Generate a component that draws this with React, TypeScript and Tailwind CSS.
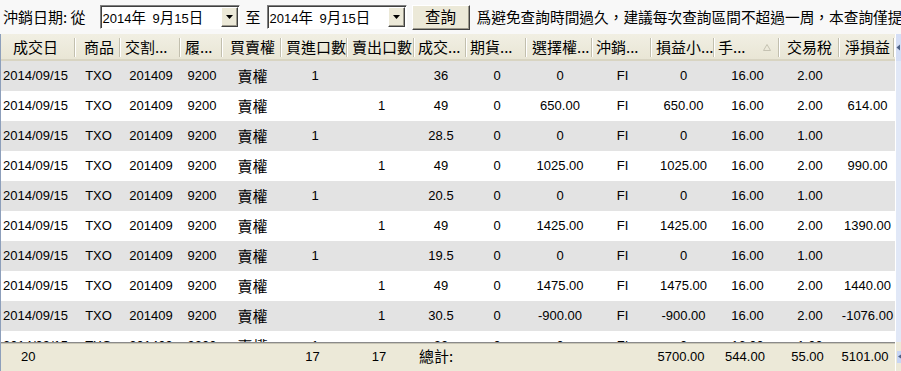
import React from "react";

const cjk = "font-['Noto_Sans_CJK_TC','Noto_Sans_CJK_SC',sans-serif]";
const num = "font-['Liberation_Sans',Arial,'Noto_Sans_CJK_TC',sans-serif]";

interface Col {
  w: string;
  label: string;
  hp: string;
  cell: string;
  sort?: boolean;
}

const cols: Col[] = [
  { w: "w-[76px]", label: "成交日", hp: "pl-[13px]", cell: "justify-start pl-[3px]" },
  { w: "w-[45px]", label: "商品", hp: "pl-[8px]", cell: "justify-center" },
  { w: "w-[60px]", label: "交割...", hp: "pl-[4px]", cell: "justify-center" },
  { w: "w-[42px]", label: "履...", hp: "pl-[4px]", cell: "justify-center" },
  { w: "w-[59px]", label: "買賣權", hp: "pl-[7px]", cell: "justify-center" },
  { w: "w-[66px]", label: "買進口數", hp: "pl-[4px]", cell: "justify-center" },
  { w: "w-[67px]", label: "賣出口數", hp: "pl-[4px]", cell: "justify-center" },
  { w: "w-[52px]", label: "成交...", hp: "pl-[3px]", cell: "justify-center" },
  { w: "w-[60px]", label: "期貨...", hp: "pl-[3px]", cell: "justify-center" },
  { w: "w-[66px]", label: "選擇權...", hp: "pl-[5px]", cell: "justify-center" },
  { w: "w-[59px]", label: "沖銷...", hp: "pl-[3px]", cell: "justify-center" },
  { w: "w-[63px]", label: "損益小...", hp: "pl-[4px]", cell: "justify-center" },
  { w: "w-[65px]", label: "手...", hp: "pl-[3px]", cell: "justify-center", sort: true },
  { w: "w-[60px]", label: "交易稅", hp: "pl-[7px]", cell: "justify-center" },
  { w: "w-[55px]", label: "淨損益", hp: "pl-[5px]", cell: "justify-center" },
];

const base = ["2014/09/15", "TXO", "201409", "9200", "賣權"];

const rows: string[][] = [
  [...base, "1", "", "36", "0", "0", "FI", "0", "16.00", "2.00", ""],
  [...base, "", "1", "49", "0", "650.00", "FI", "650.00", "16.00", "2.00", "614.00"],
  [...base, "1", "", "28.5", "0", "0", "FI", "0", "16.00", "1.00", ""],
  [...base, "", "1", "49", "0", "1025.00", "FI", "1025.00", "16.00", "2.00", "990.00"],
  [...base, "1", "", "20.5", "0", "0", "FI", "0", "16.00", "1.00", ""],
  [...base, "", "1", "49", "0", "1425.00", "FI", "1425.00", "16.00", "2.00", "1390.00"],
  [...base, "1", "", "19.5", "0", "0", "FI", "0", "16.00", "1.00", ""],
  [...base, "", "1", "49", "0", "1475.00", "FI", "1475.00", "16.00", "2.00", "1440.00"],
  [...base, "", "1", "30.5", "0", "-900.00", "FI", "-900.00", "16.00", "2.00", "-1076.00"],
  [...base, "1", "", "20", "0", "0", "FI", "0", "16.00", "1.00", ""],
];

const footer = ["20", "", "", "", "", "17", "17", "總計:", "", "", "", "5700.00", "544.00", "55.00", "5101.00"];

function DateBox() {
  return (
    <div className="flex h-[24px] w-[140px] items-center border border-t-[#808080] border-l-[#808080] border-b-white border-r-white bg-white shadow-[inset_1px_1px_0_#404040]">
      <span className={`flex-1 pl-[2px] pt-[1px] text-[14.5px] whitespace-pre text-black ${cjk}`}>
        <span className={`${num} text-[13px]`}>2014</span>年  <span className={`${num} text-[13px]`}>9</span>月
        <span className={`${num} text-[13px]`}>15</span>日
      </span>
      <div className="mr-[1px] flex h-[20px] w-[17px] items-center justify-center border border-t-white border-l-white border-b-[#404040] border-r-[#404040] bg-[#ece9d8] shadow-[inset_-1px_-1px_0_#9d9a8c]">
        <svg width="7" height="4" viewBox="0 0 7 4">
          <path d="M0 0h7L3.5 4z" fill="#000" />
        </svg>
      </div>
    </div>
  );
}

export default function App() {
  return (
    <div className={`flex h-[371px] w-[901px] flex-col overflow-hidden bg-[#f8f8f8] text-black ${cjk}`}>
      <div className="flex h-[34px] shrink-0 items-center whitespace-nowrap">
        <span className="ml-[3px] text-[15px]">沖銷日期: 從</span>
        <div className="ml-[14px]">
          <DateBox />
        </div>
        <span className="ml-[6px] text-[15px]">至</span>
        <div className="ml-[6px]">
          <DateBox />
        </div>
        <button className="ml-[5px] h-[25px] w-[58px] shrink-0 border border-t-white border-l-white border-b-[#404040] border-r-[#404040] bg-[#ece9d8] text-[15.5px] leading-none shadow-[inset_-1px_-1px_0_#9d9a8c]">
          查詢
        </button>
        <span className="ml-[7px] text-[14.7px]">
          爲避免查詢時間過久，建議每次查詢區間不超過一周，本查詢僅提供一個月內之資料
        </span>
      </div>

      <div className="flex min-h-0 flex-1">
        <div className="flex w-[895px] flex-col border-l border-[#8d9fbb]">
          <div className="flex h-[27px] shrink-0 bg-gradient-to-b from-[#f1efe3] to-[#e8e5d4] shadow-[inset_0_-2px_0_#d8d4c2]">
            {cols.map((c, i) => (
              <div key={i} className={`${c.w} flex shrink-0 items-center ${i === 0 ? "-ml-px" : ""}`}>
                <span className={`flex flex-1 items-center overflow-hidden whitespace-nowrap text-[15px] ${c.hp}`}>
                  {c.label}
                  {c.sort && (
                    <svg className="ml-auto mr-[7px]" width="8" height="7" viewBox="0 0 8 7">
                      <path d="M4 0.5L7.5 6.5H0.5z" fill="none" stroke="#c5c2b2" strokeWidth="1" />
                    </svg>
                  )}
                </span>
                <span className="h-[19px] w-[2px] shrink-0 border-l border-[#c2bfae] bg-white" />
              </div>
            ))}
          </div>

          <div className="min-h-0 flex-1 overflow-hidden">
            {rows.map((r, ri) => (
              <div key={ri} className={`flex h-[30px] ${ri % 2 === 0 ? "bg-[#e3e3e3]" : "bg-white"}`}>
                {cols.map((c, ci) => (
                  <div
                    key={ci}
                    className={`${c.w} flex shrink-0 items-center overflow-hidden whitespace-nowrap ${c.cell} ${ci === 0 ? "-ml-px" : ""} ${
                      ci === 4 ? `${cjk} text-[15px]` : `${num} text-[13px]`
                    }`}
                  >
                    {r[ci]}
                  </div>
                ))}
              </div>
            ))}
          </div>

          <div className={`flex h-[29px] shrink-0 items-center bg-[#ece9d8] shadow-[inset_0_1px_0_#8a8a8a,inset_0_2px_0_#c8c5b5] ${num} text-[13px]`}>
            {cols.map((c, ci) => (
              <div
                key={ci}
                className={`${c.w} flex shrink-0 items-center whitespace-nowrap ${ci === 0 ? "-ml-px justify-start pl-[21px]" : ci === 7 ? `justify-start pl-[4px] ${cjk} text-[15px]` : "justify-center pr-[5px]"}`}
              >
                {footer[ci]}
              </div>
            ))}
          </div>
        </div>

        <div className="flex flex-1 flex-col border-l border-white bg-[#e1e8f7]">
          <div className="flex h-[27px] items-center bg-[#d4def5]">
            <svg width="5" height="7" viewBox="0 0 5 7">
              <path d="M4 0.5L0.5 3.5 4 6.5z" fill="#4d6185" />
            </svg>
          </div>
          <div className="flex-1" />
          <div className="flex h-[29px] items-center bg-[#ece9d8]">
            <div className="ml-[1px] flex h-[12px] w-[6px] items-center bg-[#c6d5f5]">
              <svg width="5" height="5" viewBox="0 0 5 5">
                <path d="M4 0.5L1 2.5 4 4.5z" fill="#4d6185" />
              </svg>
            </div>
          </div>
        </div>
      </div>
    </div>
  );
}
